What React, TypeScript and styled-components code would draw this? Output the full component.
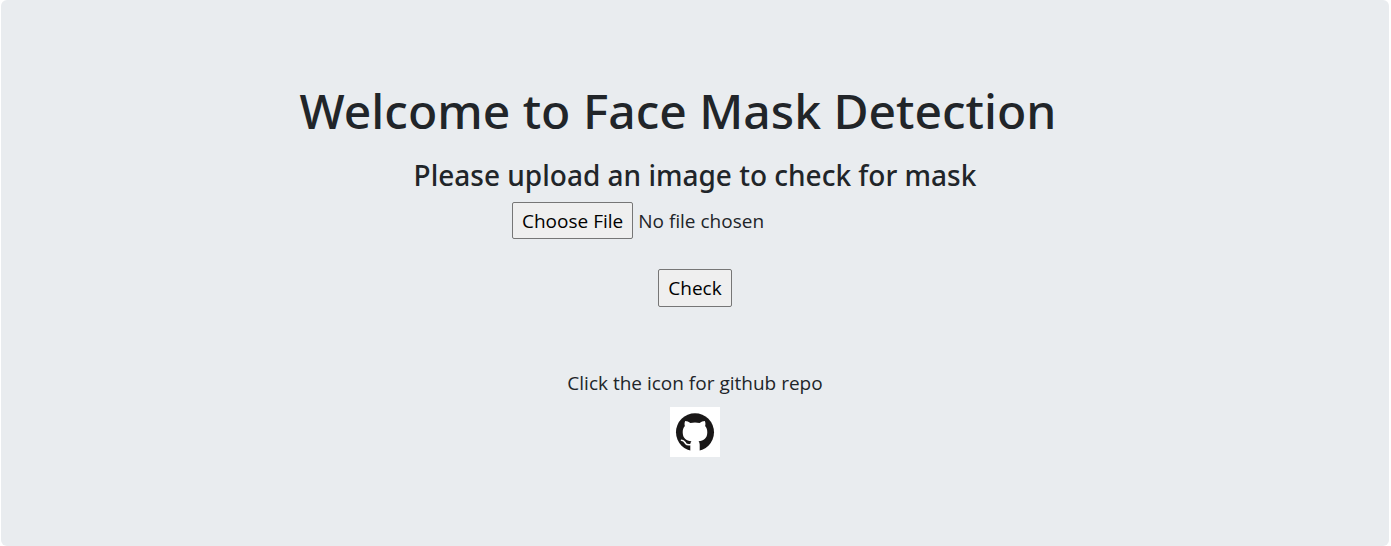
import React from "react";
import styled, { createGlobalStyle } from "styled-components";

const GlobalStyle = createGlobalStyle`
  * { box-sizing: border-box; }
  body {
    margin: 0;
    background: #fff;
    color: #212529;
    font-family: "Segoe UI", "Open Sans", "Noto Sans", sans-serif;
    font-size: 19px;
    line-height: 30px;
  }
`;

const Jumbotron = styled.main`
  display: flex;
  flex-direction: column;
  align-items: center;
  margin: 0 2px 0 1px;
  padding: 80px 40px;
  background: #e9ecef;
  border-radius: 6px;
`;

const Title = styled.h1`
  margin: 0 34px 14px 0;
  font-family: "Segoe UI", "Noto Sans", sans-serif;
  font-size: 48px;
  font-weight: 500;
  line-height: 62px;
`;

const Subtitle = styled.h2`
  margin: 0 0 8px;
  font-family: "Segoe UI", "Noto Sans", sans-serif;
  font-size: 28px;
  font-weight: 500;
  line-height: 38px;
`;

const UploadForm = styled.form`
  display: flex;
  flex-direction: column;
  align-items: center;
`;

const FileInput = styled.input`
  width: 366px;
  height: 37px;
  font: inherit;

  &::file-selector-button {
    height: 37px;
    margin: 0 5px 0 0;
    padding: 0 9px;
    border: 1px solid #767676;
    border-radius: 2px;
    background: #efefef;
    color: #000;
    font: inherit;
  }
`;

const CheckButton = styled.button`
  height: 38px;
  margin-top: 30px;
  padding: 0 9px;
  border: 1px solid #767676;
  border-radius: 2px;
  background: #efefef;
  color: #000;
  font: inherit;
`;

const RepoNote = styled.p`
  margin: 61px 0 9px;
`;

const RepoLink = styled.a`
  display: block;
  width: 50px;
  height: 50px;
  margin-bottom: 9px;
  background: #fff;
  color: #191717;
`;

const GithubMark = () => (
  <svg width="50" height="50" viewBox="0 0 50 50" aria-hidden="true">
    <circle cx="25" cy="25.3" r="19" fill="currentColor" />
    <path
      fill="#fff"
      d="M15.2 14c1.8.1 3.6.9 5.2 2a18 18 0 0 1 9.2 0c1.6-1.1 3.4-1.9 5.2-2 .8 1.8.8 3.5.3 5.1 1.5 1.7 2.2 3.7 2.2 6.1 0 6.1-3.4 8.3-8.7 9 .7.9 1.1 2 1.1 3.4V45h-9.4v-7.4c0-1.4.4-2.5 1.1-3.4-5.300-.7-8.700-2.900-8.700-9 0-2.400.7-4.400 2.200-6.100-.5-1.600-.5-3.300.3-5.100z"
    />
    <path
      fill="none"
      stroke="#fff"
      strokeWidth="1.6"
      strokeLinecap="round"
      d="M11.5 33.2c2.6.1 3 1.7 4.1 3.2 1.1 1.4 3 1.6 5.4 1.1"
    />
  </svg>
);

export default function App() {
  return (
    <>
      <GlobalStyle />
      <Jumbotron>
        <Title>Welcome to Face Mask Detection</Title>
        <Subtitle>Please upload an image to check for mask</Subtitle>
        <UploadForm onSubmit={(event) => event.preventDefault()}>
          <FileInput type="file" accept="image/*" aria-label="Image to check" />
          <CheckButton type="submit">Check</CheckButton>
        </UploadForm>
        <RepoNote>Click the icon for github repo</RepoNote>
        <RepoLink href="https://github.com" aria-label="GitHub repository">
          <GithubMark />
        </RepoLink>
      </Jumbotron>
    </>
  );
}
